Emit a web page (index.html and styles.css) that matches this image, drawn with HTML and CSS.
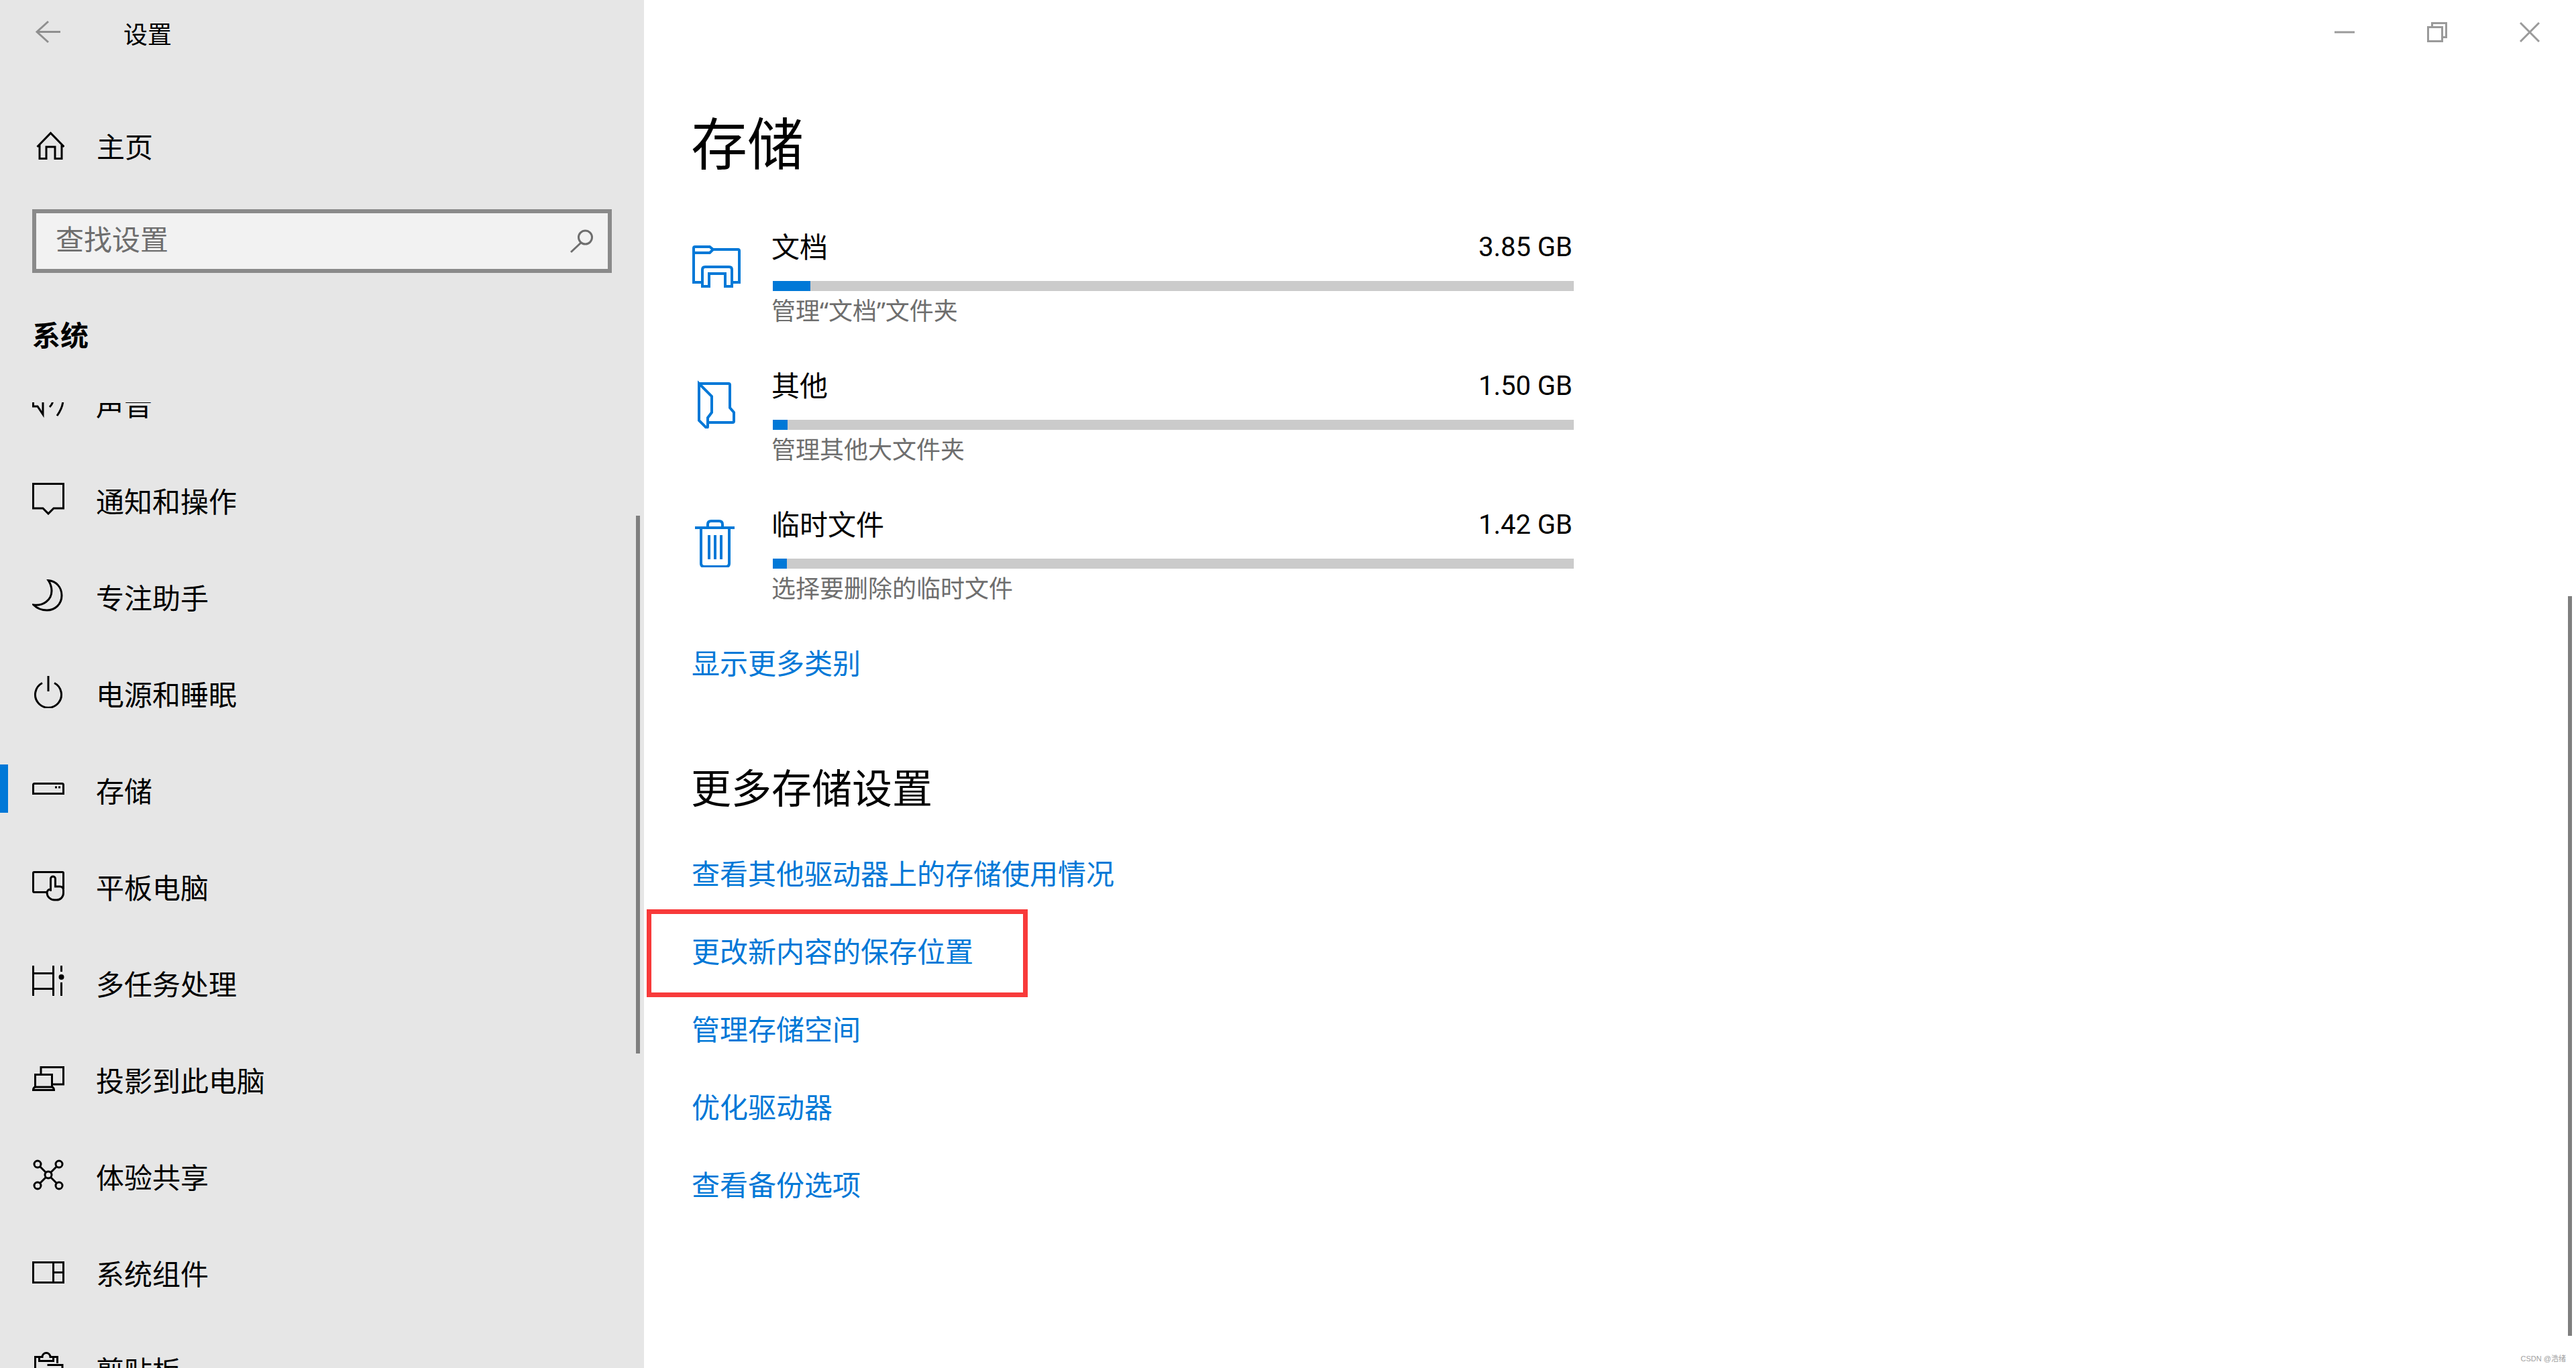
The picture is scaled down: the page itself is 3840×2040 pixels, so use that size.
FILE: index.html
```html
<!DOCTYPE html>
<html lang="zh-CN">
<head>
  <meta charset="UTF-8" />
  <title>设置</title>
  <link rel="stylesheet" href="styles.css">
</head>
<body>
  <aside class="sidebar">
    <div class="side-top">
      <svg class="icon back-icon" viewBox="0 0 48 48"><path d="M24 8L7 23.5L24 39M7 23.5H42"/></svg>
      <span class="app-title">设置</span>
    </div>
    <div class="home-row">
      <svg class="icon" viewBox="0 0 48 48"><path d="M7.5 23L27.5 2.5L47.5 23M11 20V40.5H21V23H34V40.5H44V20"/></svg>
      <span class="nav-label">主页</span>
    </div>
    <div class="search-box">
      <span class="search-text">查找设置</span>
      <svg class="search-icon" viewBox="0 0 36 36"><circle cx="23.5" cy="12" r="10"/><path d="M17 20L2 34"/></svg>
    </div>
    <h2 class="side-heading">系统</h2>
    <div class="nav-scroll">
      <ul class="nav-list">
        <li class="nav-row">
          <svg class="icon" viewBox="0 0 48 48"><path d="M1.5 20V30H8L16 42V10M31 20c0 4-2 8-5 11M46 20c0 9-4 17-9 24"/></svg>
          <span class="nav-label">声音</span>
        </li>
        <li class="nav-row">
          <svg class="icon" viewBox="0 0 48 48"><path d="M1.5 1.5H46.5V38H32L24 46L16 38H1.5Z"/></svg>
          <span class="nav-label">通知和操作</span>
        </li>
        <li class="nav-row">
          <svg class="icon" viewBox="0 0 48 48"><path d="M24 1.5C36 2.500 44 12 44 24C44 37 34 46 22 46C14 46 7 43 2 38C16 40 29 31 29 17C29 11 27 6 24 1.500Z"/></svg>
          <span class="nav-label">专注助手</span>
        </li>
        <li class="nav-row">
          <svg class="icon" viewBox="0 0 48 48"><path d="M24 0V23M15 10.500A19.500 19.500 0 1 0 33 10.500"/></svg>
          <span class="nav-label">电源和睡眠</span>
        </li>
        <li class="nav-row active">
          <svg class="icon" viewBox="0 0 48 48"><path d="M3.500 16.500H44.500Q46.500 16.500 46.500 18.500V31.500H1.500V18.500Q1.500 16.500 3.500 16.500Z"/><path d="M34 22H37M39 22H42"/></svg>
          <span class="nav-label">存储</span>
        </li>
        <li class="nav-row">
          <svg class="icon" viewBox="0 0 48 48"><path d="M22 34.500H3Q1.500 34.500 1.500 33V6Q1.500 4.500 3 4.500H45Q46.500 4.500 46.500 6V30"/><path d="M27.500 33V14.500A3.500 3.500 0 0 1 34.500 14.500V26H41Q46.500 26 46.500 31.500V36A10 10 0 0 1 36.500 46H33A11 11 0 0 1 22 35A6 6 0 0 1 27.500 30"/></svg>
          <span class="nav-label">平板电脑</span>
        </li>
        <li class="nav-row">
          <svg class="icon" viewBox="0 0 48 48"><path d="M1.500 0V45M31.500 0V45M1.500 11.500H31.500M1.500 34.500H31.500M43.500 0V9M43.500 25V45"/><circle class="solid" cx="43.500" cy="17" r="4"/></svg>
          <span class="nav-label">多任务处理</span>
        </li>
        <li class="nav-row">
          <svg class="icon" viewBox="0 0 48 48"><path d="M13 17V7.500H46.500V33H31M4.500 37V18.500H29.500V37M1.500 41.500Q1.500 38 4.500 37H29.500Q32.500 38 32.500 41.500Z"/></svg>
          <span class="nav-label">投影到此电脑</span>
        </li>
        <li class="nav-row">
          <svg class="icon" viewBox="0 0 48 48"><circle cx="8" cy="8" r="5"/><circle cx="40" cy="8" r="5"/><circle cx="8" cy="40" r="5"/><circle cx="40" cy="40" r="5"/><circle cx="24" cy="24" r="5"/><path d="M12 12L20 20M36 12L28 20M12 36L20 28M36 36L28 28"/></svg>
          <span class="nav-label">体验共享</span>
        </li>
        <li class="nav-row">
          <svg class="icon" viewBox="0 0 48 48"><path d="M1.500 10.500H46.500V40.500H1.500ZM31.500 10.500V40.500M31.500 25.500H46.500"/></svg>
          <span class="nav-label">系统组件</span>
        </li>
        <li class="nav-row">
          <svg class="icon" viewBox="0 0 48 48"><path d="M4.500 48V7.500H15A6 6 0 0 1 27 7.500H37.500V17M10.500 7.500V13.500H31.500V7.500M22.500 19.500H45V48"/></svg>
          <span class="nav-label">剪贴板</span>
        </li>
      </ul>
    </div>
    <div class="side-scrollbar"></div>
  </aside>

  <main class="main">
    <div class="titlebar">
      <button class="win-btn"><svg viewBox="0 0 30 30"><path d="M0 15H30"/></svg></button>
      <button class="win-btn"><svg viewBox="0 0 30 30"><path d="M1.500 7.500H22.500V28.500H1.500ZM7.500 7.500V1.500H28.500V22.500H22.500"/></svg></button>
      <button class="win-btn"><svg viewBox="0 0 30 30"><path d="M1 1L29 29M29 1L1 29"/></svg></button>
    </div>

    <div class="content">
      <h1 class="page-title">存储</h1>

      <div class="storage-row">
        <svg class="storage-icon" viewBox="0 0 72 72"><path d="M15 61H2V10Q2 8 4 8H26L31 12H68Q70 12 70 14V61H59M2 17H26L31 12M15 67V42Q15 38 19 38H55Q59 38 59 42V67H49V48H25V67Z"/></svg>
        <div class="storage-info">
          <div class="storage-head"><span>文档</span><span class="storage-size">3.85 GB</span></div>
          <div class="bar"><div class="bar-fill" style="width: 56px"></div></div>
          <div class="storage-sub">管理“文档”文件夹</div>
        </div>
      </div>

      <div class="storage-row">
        <svg class="storage-icon" viewBox="0 2 72 72"><path d="M10 7H54Q56 7 56 9V43L62 50V63Q62 65 60 65H25M10 7L29 26V50L23 58V71Q23 74 20 72L10 62Z"/></svg>
        <div class="storage-info">
          <div class="storage-head"><span>其他</span><span class="storage-size">1.50 GB</span></div>
          <div class="bar"><div class="bar-fill" style="width: 22px"></div></div>
          <div class="storage-sub">管理其他大文件夹</div>
        </div>
      </div>

      <div class="storage-row">
        <svg class="storage-icon" viewBox="0 -1 72 72"><path d="M4 12H63M13 12V65Q13 70 18 70H50Q55 70 55 65V12M23 12V7Q23 2 28 2H40Q45 2 45 7V12M25 23V59M34 23V59M43 23V59"/></svg>
        <div class="storage-info">
          <div class="storage-head"><span>临时文件</span><span class="storage-size">1.42 GB</span></div>
          <div class="bar"><div class="bar-fill" style="width: 21px"></div></div>
          <div class="storage-sub">选择要删除的临时文件</div>
        </div>
      </div>

      <a class="link show-more">显示更多类别</a>

      <h2 class="section-title">更多存储设置</h2>
      <div class="link-list">
        <a class="link">查看其他驱动器上的存储使用情况</a>
        <a class="link">更改新内容的保存位置</a>
        <a class="link">管理存储空间</a>
        <a class="link">优化驱动器</a>
        <a class="link">查看备份选项</a>
      </div>
    </div>

    <div class="red-mark"></div>
    <div class="main-scrollbar"></div>
    <div class="watermark">CSDN @浩绪</div>
  </main>
</body>
</html>
```
FILE: styles.css
```css
* { margin: 0; padding: 0; box-sizing: border-box; }
body {
  display: flex;
  height: 2040px;
  overflow: hidden;
  background: #fff;
  color: #000;
  font-family: "Noto Sans CJK SC", "Noto Sans", sans-serif;
  font-size: 42px;
}

/* Sidebar */
.sidebar {
  position: relative;
  display: flex;
  flex-direction: column;
  width: 960px;
  height: 2040px;
  background: #e6e6e6;
}
.icon {
  flex: none;
  width: 48px;
  height: 48px;
  fill: none;
  stroke: #000;
  stroke-width: 3;
}
.icon .solid { fill: #000; stroke: none; }
.back-icon { stroke: #8f8f8f; }
.side-top {
  display: flex;
  align-items: center;
  gap: 88px;
  height: 72px;
  margin-top: 12px;
  padding-left: 48px;
}
.app-title { font-size: 36px; line-height: 48px; padding-top: 2px; }
.home-row {
  display: flex;
  align-items: center;
  gap: 48px;
  height: 48px;
  margin-top: 112px;
  padding-left: 48px;
}
.nav-label { line-height: 56px; padding-top: 3px; }
.home-row .nav-label { padding-top: 0; margin-bottom: 6px; }
.search-box {
  display: flex;
  align-items: center;
  justify-content: space-between;
  width: 864px;
  height: 95px;
  margin: 68px 0 0 48px;
  padding: 0 21px 0 29px;
  background: #f2f2f2;
  border: 6px solid #8a8a8a;
}
.search-text { color: #6e6e6e; line-height: 56px; margin-bottom: 10px; }
.search-icon {
  width: 36px;
  height: 36px;
  fill: none;
  stroke: #6e6e6e;
  stroke-width: 3;
}
.side-heading {
  height: 56px;
  margin: 63px 0 0 48px;
  font-size: 42px;
  font-weight: 700;
  line-height: 56px;
}
.nav-scroll {
  flex: 1;
  margin-top: 74px;
  overflow: hidden;
}
.nav-list { margin-top: -72px; list-style: none; }
.nav-row {
  display: flex;
  align-items: center;
  gap: 47px;
  height: 144px;
  padding-left: 48px;
}
.nav-row.active { position: relative; }
.nav-row.active::before {
  content: "";
  position: absolute;
  left: 0;
  top: 36px;
  width: 12px;
  height: 72px;
  background: #0078d7;
}
.side-scrollbar {
  position: absolute;
  left: 948px;
  top: 769px;
  width: 6px;
  height: 802px;
  background: #7f7f7f;
}

/* Main */
.main {
  position: relative;
  flex: 1;
  display: flex;
  flex-direction: column;
  height: 2040px;
}
.titlebar {
  display: flex;
  justify-content: flex-end;
  height: 96px;
}
.win-btn {
  display: flex;
  align-items: center;
  justify-content: center;
  width: 138px;
  height: 96px;
  background: none;
  border: none;
}
.win-btn svg {
  width: 30px;
  height: 30px;
  fill: none;
  stroke: #9a9a9a;
  stroke-width: 3;
}
.content {
  display: flex;
  flex-direction: column;
  align-items: flex-start;
  padding-left: 72px;
}
.page-title {
  margin: 60px 0 0 -2px;
  font-size: 84px;
  font-weight: 400;
  line-height: 108px;
}
.storage-row {
  display: flex;
  gap: 48px;
  width: 1314px;
  margin-top: 61px;
}
.page-title + .storage-row { margin-top: 78px; }
.storage-icon {
  flex: none;
  width: 72px;
  height: 72px;
  margin-top: 18px;
  fill: none;
  stroke: #0078d7;
  stroke-width: 4;
}
.storage-info { flex: 1; }
.storage-head {
  display: flex;
  justify-content: space-between;
  height: 48px;
  margin-left: -2px;
  line-height: 48px;
}
.storage-size {
  padding-right: 2px;
  font-family: Roboto, sans-serif;
  font-size: 40px;
  line-height: 54px;
}
.bar {
  height: 15px;
  margin-top: 29px;
  background: #cbcbcb;
}
.bar-fill { height: 100%; background: #0078d7; }
.storage-sub {
  margin: 6px 0 0 -2px;
  color: #6e6e6e;
  font-family: "Noto Sans", "Noto Sans CJK SC", sans-serif;
  font-size: 36px;
  line-height: 48px;
}
.link { margin-left: -1px; color: #0078d7; line-height: 56px; }
.show-more { margin-top: 57px; }
.section-title {
  margin: 117px 0 0 -2px;
  font-size: 60px;
  font-weight: 400;
  line-height: 80px;
}
.link-list {
  display: flex;
  flex-direction: column;
  align-items: flex-start;
  gap: 60px;
  margin-top: 61px;
}

/* Overlays */
.red-mark {
  position: absolute;
  left: 4px;
  top: 1356px;
  width: 568px;
  height: 131px;
  border: 7px solid #f83a3a;
}
.main-scrollbar {
  position: absolute;
  right: 6px;
  top: 889px;
  width: 6px;
  height: 1103px;
  background: #7f7f7f;
}
.watermark {
  position: absolute;
  right: 15px;
  bottom: 7px;
  color: #a0a0a0;
  font-family: "Liberation Sans", "Noto Sans CJK SC", sans-serif;
  font-size: 11px;
}
```
